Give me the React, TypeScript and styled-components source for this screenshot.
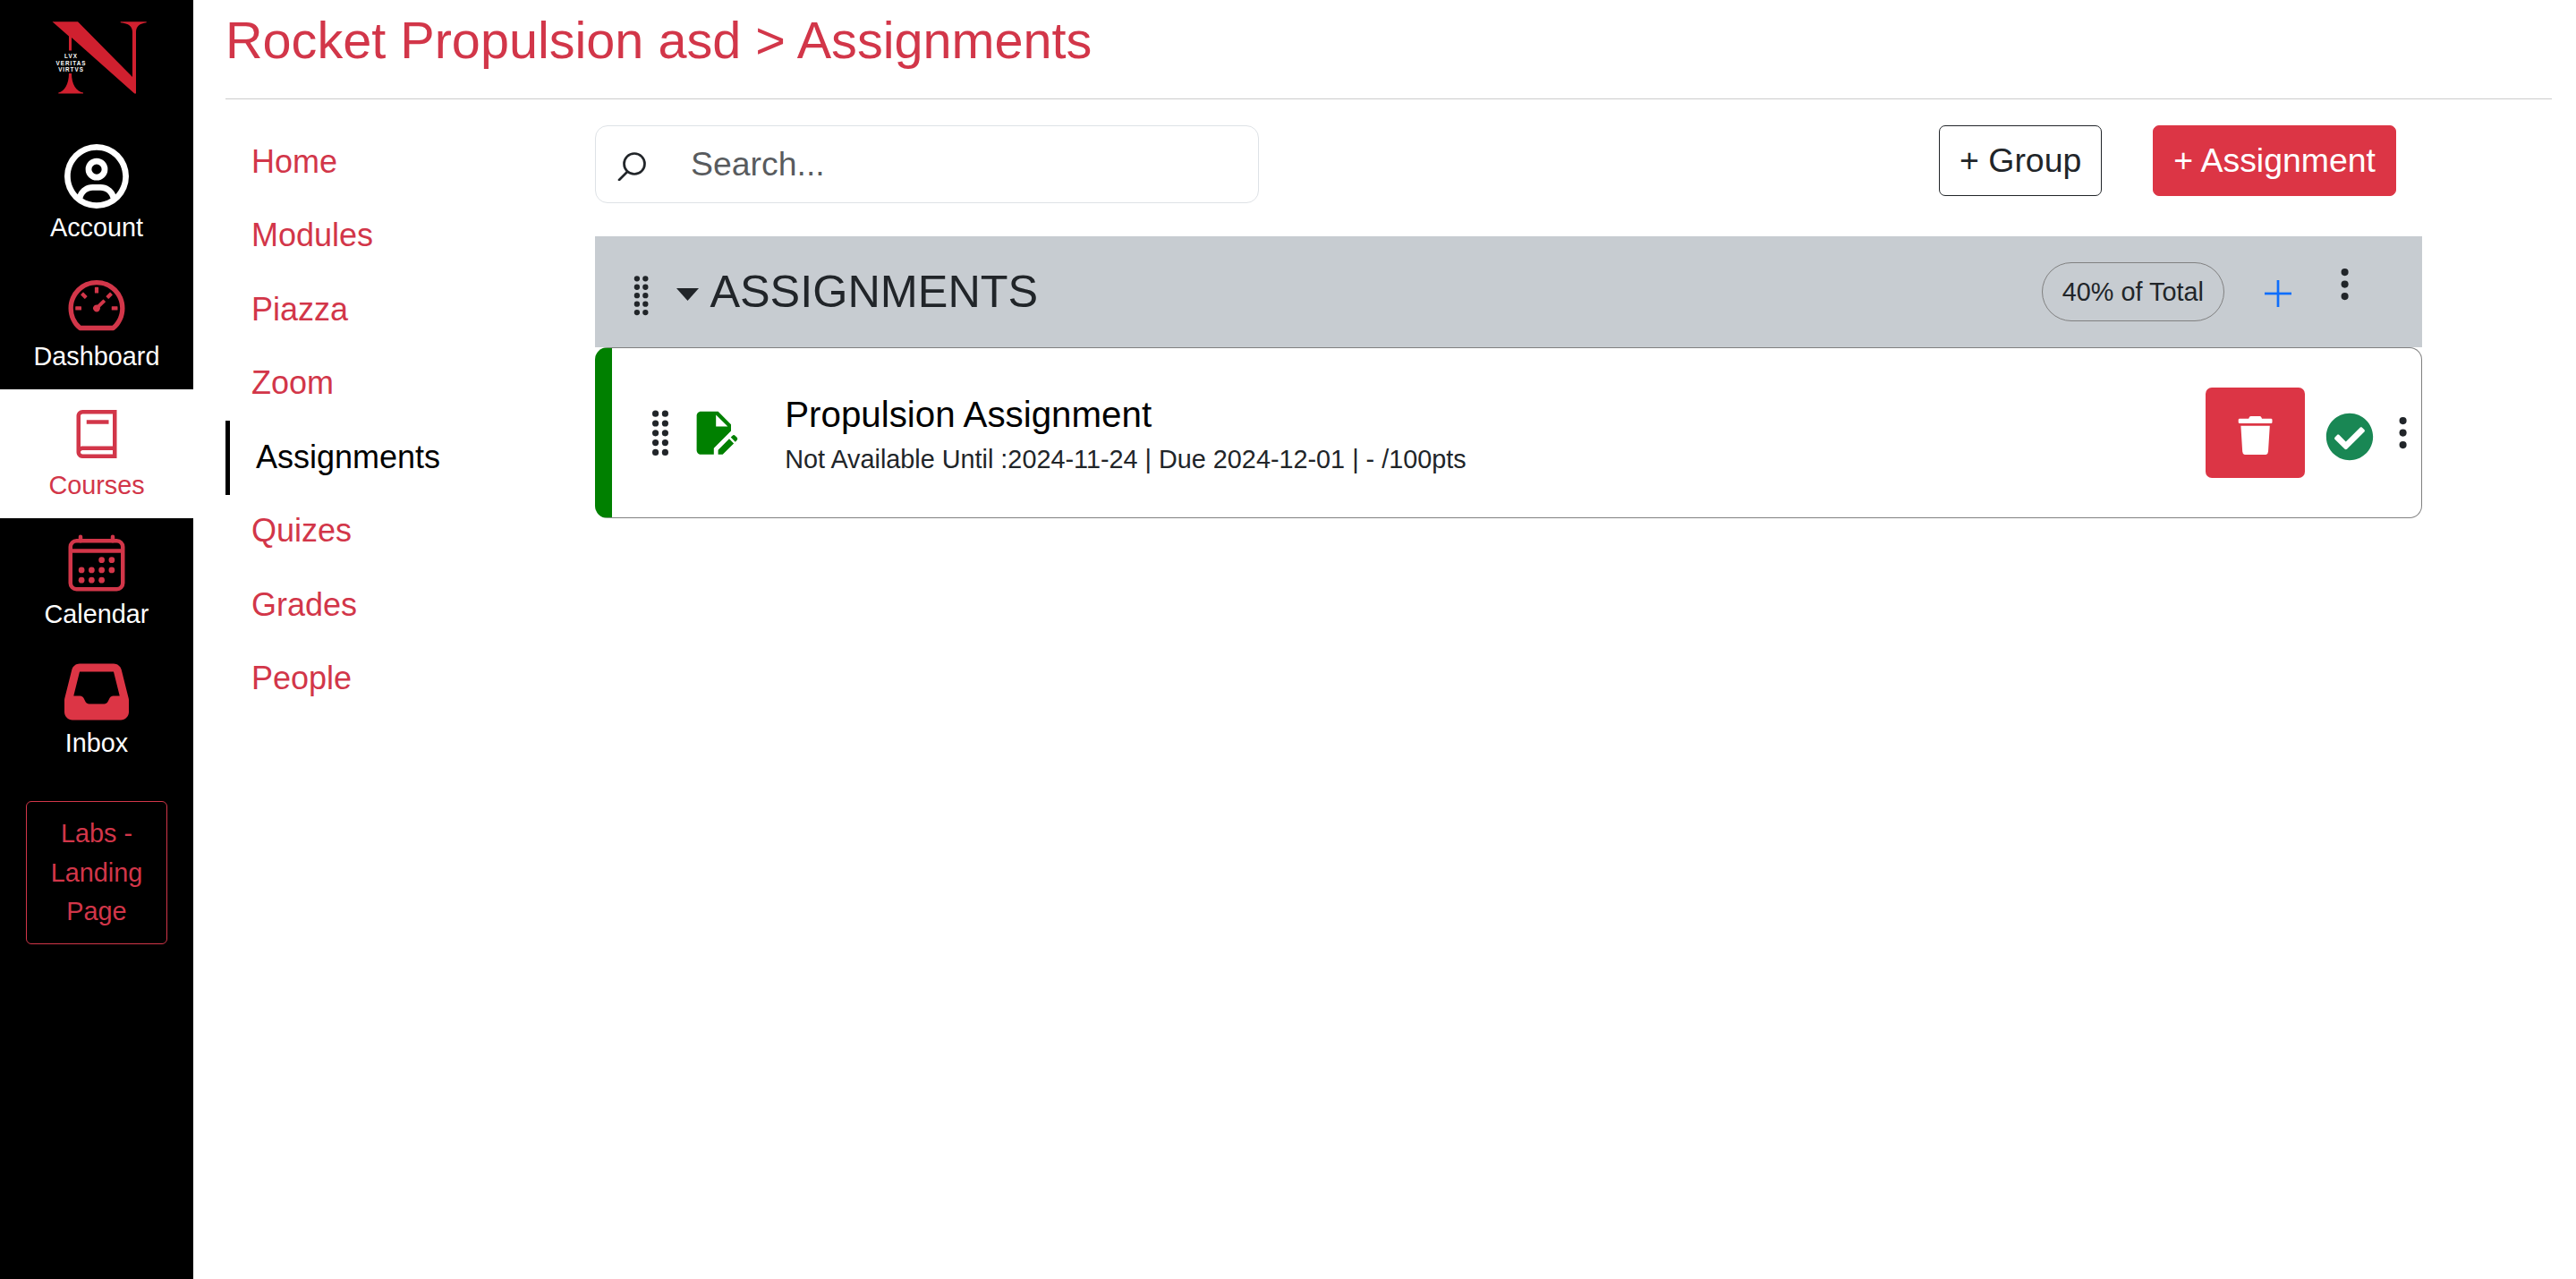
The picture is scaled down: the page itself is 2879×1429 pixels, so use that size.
import React from "react";
import styled, { createGlobalStyle } from "styled-components";
import { FaRegCircleUser, FaInbox } from "react-icons/fa6";
import { AiOutlineDashboard } from "react-icons/ai";
import { LiaBookSolid } from "react-icons/lia";
import { IoCalendarOutline, IoEllipsisVertical } from "react-icons/io5";
import { FaTrash, FaCheckCircle } from "react-icons/fa";
import { BsGripVertical } from "react-icons/bs";
import { MdEditDocument } from "react-icons/md";

const RED = "#dc3545";
const RED_TEXT = "#d23649";

const Global = createGlobalStyle`
  html, body { margin: 0; padding: 0; background: #fff; }
  body { font-family: "Liberation Sans", Arial, sans-serif; color: #212529; overflow: hidden; }
  * { box-sizing: border-box; }
`;

const Page = styled.div`
  display: flex;
  min-height: 100vh;
`;

const Sidebar = styled.nav`
  width: 216px;
  flex: none;
  background: #000;
  display: flex;
  flex-direction: column;
  align-items: stretch;
`;

const LogoBox = styled.div`
  height: 147px;
  display: flex;
  justify-content: center;
  svg { display: block; margin-top: 10px; }
`;

const SideItem = styled.div<{ $active?: boolean }>`
  height: 144px;
  padding-top: 14px;
  display: flex;
  flex-direction: column;
  align-items: center;
  background: ${(p) => (p.$active ? "#fff" : "#000")};
  color: ${(p) => (p.$active ? RED_TEXT : "#fff")};
  font-size: 28.8px;
  line-height: 43px;
`;

const SideIcon = styled.div<{ $tone?: "white" | "solid" }>`
  height: 72px;
  display: flex;
  align-items: center;
  justify-content: center;
  color: ${(p) => (p.$tone === "white" ? "#fff" : p.$tone === "solid" ? RED : RED_TEXT)};
  svg { display: block; }
`;

const LabsBox = styled.div`
  width: 158px;
  margin: 28px auto 0;
  padding: 14.4px 10px;
  border: 1px solid ${RED_TEXT};
  border-radius: 6px;
  color: ${RED_TEXT};
  font-size: 28.8px;
  line-height: 43.2px;
  text-align: center;
`;

const Main = styled.main`
  flex: 1;
  min-width: 0;
  padding: 0 27px 0 36px;
`;

const Title = styled.h1`
  margin: 0;
  height: 111px;
  padding-top: 12px;
  border-bottom: 1px solid #ccc;
  color: ${RED_TEXT};
  font-size: 57.6px;
  font-weight: 400;
  line-height: 66px;
`;

const Body = styled.div`
  display: flex;
  padding-top: 29px;
`;

const CourseNav = styled.ul`
  list-style: none;
  margin: 0;
  padding: 0;
  width: 413px;
  flex: none;
`;

const CourseLink = styled.li<{ $active?: boolean }>`
  height: 82.5px;
  padding-bottom: 1px;
  display: flex;
  align-items: center;
  font-size: 36px;
  color: ${(p) => (p.$active ? "#000" : RED_TEXT)};
  padding-left: 29px;
  border-left: ${(p) => (p.$active ? "5px solid #000" : "none")};
`;

const Content = styled.section`
  width: 2042px;
  flex: none;
`;

const Toolbar = styled.div`
  display: flex;
  align-items: flex-start;
  padding-right: 29px;
  margin-bottom: 37px;
`;

const SearchBox = styled.label`
  width: 742px;
  height: 87px;
  display: flex;
  align-items: center;
  border: 1px solid #dee2e6;
  border-radius: 14px;
  padding-left: 24px;
  svg { flex: none; display: block; }
`;

const SearchInput = styled.input`
  border: 0;
  outline: 0;
  padding: 0;
  flex: 1;
  min-width: 0;
  margin-left: 46px;
  font: 37.44px "Liberation Sans", Arial, sans-serif;
  color: #212529;
  background: transparent;
  &::placeholder { color: rgba(33, 37, 41, 0.75); opacity: 1; }
`;

const ActionButton = styled.button<{ $primary?: boolean }>`
  height: 79px;
  padding: 0 22px;
  border: 1px solid ${(p) => (p.$primary ? RED : "#212529")};
  border-radius: 7px;
  background: ${(p) => (p.$primary ? RED : "#fff")};
  color: ${(p) => (p.$primary ? "#fff" : "#212529")};
  font: 37.44px "Liberation Sans", Arial, sans-serif;
  margin-left: ${(p) => (p.$primary ? "57px" : "auto")};
`;

const SectionHeader = styled.div`
  height: 124px;
  display: flex;
  align-items: center;
  background: #c7ccd1;
  padding: 0 65px 0 28px;
  svg { display: block; flex: none; }
`;

const GroupGrip = styled.div`
  margin-top: 8px;
  color: #212529;
`;

const Caret = styled.div`
  margin: 6px 12px 0 13px;
  svg { display: block; }
`;

const SectionTitle = styled.span`
  font-size: 50.4px;
  margin-bottom: 2px;
  color: #212529;
`;

const Badge = styled.span`
  margin-left: auto;
  height: 66px;
  padding: 0 22px;
  display: flex;
  align-items: center;
  border: 1px solid #808080;
  border-radius: 33px;
  font-size: 28.8px;
  color: #212529;
`;

const PlusWrap = styled.div`
  margin: 4px 0 0 45px;
`;

const GroupMenu = styled.div`
  margin: 0 0 16px 38px;
  color: #212529;
`;

const ItemRow = styled.div`
  height: 191px;
  display: flex;
  align-items: center;
  border: 1px solid #808080;
  border-left: 19px solid green;
  border-radius: 14px;
  padding-left: 27px;
  svg { display: block; flex: none; }
`;

const ItemGrip = styled.div`
  color: #212529;
`;

const DocIcon = styled.div`
  color: green;
`;

const ItemText = styled.div`
  margin-left: 51px;
  padding-top: 4px;
  flex: 1;
  min-width: 0;
`;

const ItemTitle = styled.div`
  font-size: 40.3px;
  line-height: 57px;
  color: #000;
`;

const ItemMeta = styled.div`
  font-size: 28.8px;
  line-height: 43.2px;
  color: #212529;
`;

const TrashButton = styled.button`
  width: 111px;
  height: 101px;
  border: 0;
  border-radius: 7px;
  background: ${RED};
  color: #fff;
  display: flex;
  align-items: center;
  justify-content: center;
  padding: 6px 0 0;
`;

const CheckWrap = styled.div`
  margin: 8px 0 0 23px;
  color: #198754;
`;

const ItemMenu = styled.div`
  margin: 0 -1px 0 11px;
  color: #212529;
`;

const SearchGlyph = () => (
  <svg width="36" height="36" viewBox="0 0 36 36" fill="none" stroke="#212529" strokeWidth="2.7" strokeLinecap="round">
    <circle cx="19" cy="17" r="11.5" />
    <line x1="11" y1="26" x2="2" y2="35" />
  </svg>
);

const PlusGlyph = () => (
  <svg width="30" height="30" viewBox="0 0 30 30" stroke="#0d6efd" strokeWidth="2.7">
    <line x1="0" y1="15" x2="30" y2="15" />
    <line x1="15" y1="0" x2="15" y2="30" />
  </svg>
);

const Logo = () => (
  <svg width="150" height="110" viewBox="30 10 150 110">
    <g fill="#d0202f">
      <path d="M55.5 24.3H84L145 86V36C145 30 141 26 131.7 25.3V24.3H160.7V25.3C153 26 149 30 149 36V104.5H147.3L77 42V56.5H74V40.5Z" />
      <path d="M74 82H77C77 94 82 102 90 103.5V104.5H62.3V103.5C69 102 74 94 74 82Z" />
    </g>
    <g fill="#fff" fontFamily="'Liberation Sans', Arial, sans-serif" fontSize="6.3" fontWeight="700" textAnchor="middle">
      <text x="76.5" y="65" letterSpacing="1">LVX</text>
      <text x="76.5" y="72.8" letterSpacing="1">VERITAS</text>
      <text x="76.5" y="80.3" letterSpacing="1">VIRTVS</text>
    </g>
  </svg>
);

const courseLinks = ["Home", "Modules", "Piazza", "Zoom", "Assignments", "Quizes", "Grades", "People"];

export default function App() {
  return (
    <Page>
      <Global />
      <Sidebar>
        <LogoBox><Logo /></LogoBox>
        <SideItem>
          <SideIcon $tone="white"><FaRegCircleUser size={72} /></SideIcon>
          Account
        </SideItem>
        <SideItem>
          <SideIcon><AiOutlineDashboard size={72} /></SideIcon>
          Dashboard
        </SideItem>
        <SideItem $active>
          <SideIcon><LiaBookSolid size={72} /></SideIcon>
          Courses
        </SideItem>
        <SideItem>
          <SideIcon><IoCalendarOutline size={72} /></SideIcon>
          Calendar
        </SideItem>
        <SideItem>
          <SideIcon $tone="solid"><FaInbox size={72} /></SideIcon>
          Inbox
        </SideItem>
        <LabsBox>Labs - Landing Page</LabsBox>
      </Sidebar>
      <Main>
        <Title>Rocket Propulsion asd &gt; Assignments</Title>
        <Body>
          <CourseNav>
            {courseLinks.map((l) => (
              <CourseLink key={l} $active={l === "Assignments"}>{l}</CourseLink>
            ))}
          </CourseNav>
          <Content>
            <Toolbar>
              <SearchBox>
                <SearchGlyph />
                <SearchInput placeholder="Search..." />
              </SearchBox>
              <ActionButton>+ Group</ActionButton>
              <ActionButton $primary>+ Assignment</ActionButton>
            </Toolbar>
            <SectionHeader>
              <GroupGrip><BsGripVertical size={50.4} /></GroupGrip>
              <Caret>
                <svg width="25" height="14" viewBox="0 0 25 14"><polygon points="0,0 25,0 12.5,14" fill="#212529" /></svg>
              </Caret>
              <SectionTitle>ASSIGNMENTS</SectionTitle>
              <Badge>40% of Total</Badge>
              <PlusWrap><PlusGlyph /></PlusWrap>
              <GroupMenu><IoEllipsisVertical size={43.2} /></GroupMenu>
            </SectionHeader>
            <ItemRow>
              <ItemGrip><BsGripVertical size={57.6} /></ItemGrip>
              <DocIcon><MdEditDocument size={57.6} /></DocIcon>
              <ItemText>
                <ItemTitle>Propulsion Assignment</ItemTitle>
                <ItemMeta>Not Available Until :2024-11-24 | Due 2024-12-01 | - /100pts</ItemMeta>
              </ItemText>
              <TrashButton><FaTrash size={43.2} /></TrashButton>
              <CheckWrap><FaCheckCircle size={54} /></CheckWrap>
              <ItemMenu><IoEllipsisVertical size={43.2} /></ItemMenu>
            </ItemRow>
          </Content>
        </Body>
      </Main>
    </Page>
  );
}
